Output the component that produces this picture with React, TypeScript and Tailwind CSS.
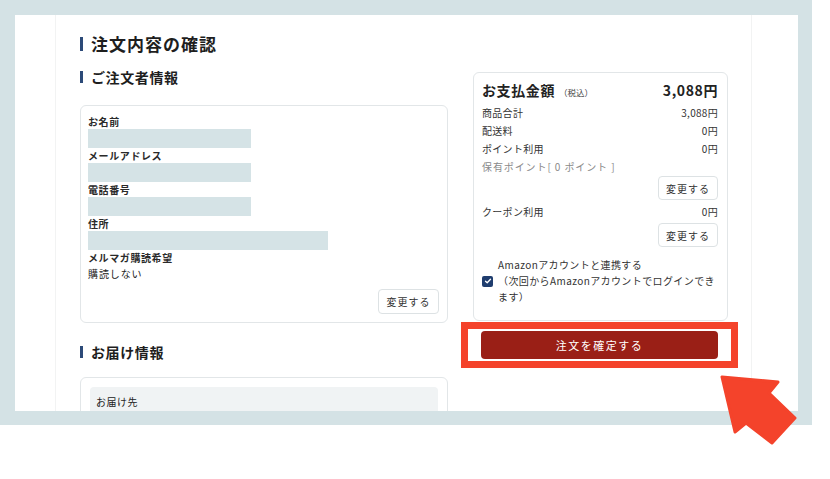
import React from "react";

const SectionTitle = ({ label, big }: { label: string; big?: boolean }) => (
  <div className="flex items-center gap-[8px]">
    <span className={`w-[3px] bg-[#2c4a78] ${big ? "h-[14px]" : "h-[12px]"}`} />
    <span className={`font-bold text-[#1e1e1e] ${big ? "text-[17px] leading-[24px] tracking-[1px]" : "text-[14px] leading-[20px] tracking-[0.6px]"}`}>
      {label}
    </span>
  </div>
);

const Field = ({ label, wide }: { label: string; wide?: boolean }) => (
  <>
    <div className="text-[10px] leading-[15px] font-bold tracking-[0.6px] text-[#2a2a2a]">{label}</div>
    <div className={`h-[19px] bg-[#d5e3e6] ${wide ? "w-[240px]" : "w-[163px]"}`} />
  </>
);

const SmallButton = ({ className = "" }: { className?: string }) => (
  <button className={`self-end w-[60px] h-[24px] border border-[#dde2e4] rounded-[4px] bg-white text-[10px] tracking-[1px] text-[#333] ${className}`}>
    変更する
  </button>
);

const Row = ({ label, value, muted }: { label: string; value?: string; muted?: boolean }) => (
  <div className={`flex justify-between text-[10px] leading-[18px] ${muted ? "text-[#8a8a8a] tracking-[0.9px]" : "text-[#333] tracking-[0.3px]"}`}>
    <span>{label}</span>
    {value && <span>{value}</span>}
  </div>
);

export default function App() {
  return (
    <div className="relative w-[830px] h-[479px] bg-white overflow-hidden font-['Noto_Sans_CJK_JP',sans-serif] text-[#222]">
      <div className="w-[812px] h-[425px] bg-[#d4e2e5] pt-[15px] pl-[15px]">
        <div className="w-[783px] h-[396px] bg-white overflow-hidden">
          <div className="ml-[40px] w-[697px] h-full border-x border-[#f2f3f3] pl-[24px] pr-[23px] pt-[17px]">
            <SectionTitle label="注文内容の確認" big />

            <div className="flex items-start gap-[25px] mt-[11px]">
              {/* left column */}
              <div className="w-[368px] flex flex-col">
                <SectionTitle label="ご注文者情報" />
                <div className="mt-[18px] border border-[#e2e6e8] rounded-[6px] pt-[8px] pl-[7px] pr-[8px] pb-[8px] flex flex-col">
                  <Field label="お名前" />
                  <Field label="メールアドレス" />
                  <Field label="電話番号" />
                  <Field label="住所" wide />
                  <div className="text-[10px] leading-[15px] font-bold tracking-[0.6px] text-[#2a2a2a]">メルマガ購読希望</div>
                  <div className="text-[10px] leading-[17px] tracking-[0.9px]">購読しない</div>
                  <SmallButton className="mt-[7px] w-[61px] h-[25px]" />
                </div>

                <div className="mt-[19px]">
                  <SectionTitle label="お届け情報" />
                </div>
                <div className="mt-[15px] border border-[#e2e6e8] rounded-[6px] p-[9px]">
                  <div className="bg-[#f0f3f4] rounded-[4px] pt-[8px] px-[6px] h-[80px]">
                    <div className="text-[10px] leading-[14px] tracking-[0.5px]">お届け先</div>
                  </div>
                </div>
              </div>

              {/* right column */}
              <div className="w-[255px] flex flex-col mt-[5px]">
                <div className="border border-[#e2e6e8] rounded-[6px] pt-[7px] pl-[8px] pr-[9px] pb-[15px] flex flex-col">
                  <div className="flex justify-between items-center h-[20px]">
                    <div className="flex items-baseline">
                      <span className="text-[14px] font-bold tracking-[0.6px]">お支払金額</span>
                      <span className="text-[8.5px] ml-[4px] text-[#444]">（税込）</span>
                    </div>
                    <span className="text-[14px] font-bold tracking-[0.6px]">3,088円</span>
                  </div>
                  <div className="mt-[4px]">
                    <Row label="商品合計" value="3,088円" />
                    <Row label="配送料" value="0円" />
                    <Row label="ポイント利用" value="0円" />
                    <Row label="保有ポイント[ 0 ポイント ]" muted />
                  </div>
                  <SmallButton />
                  <div className="mt-[3px]">
                    <Row label="クーポン利用" value="0円" />
                  </div>
                  <SmallButton className="mt-[2px]" />
                  <div className="mt-[10px] flex items-center gap-[5px]">
                    <span className="w-[11px] h-[11px] rounded-[2px] bg-[#1f3d6e] flex items-center justify-center shrink-0">
                      <svg width="8" height="8" viewBox="0 0 8 8">
                        <path d="M1.5 4.2 L3.2 5.8 L6.5 2.2" fill="none" stroke="white" strokeWidth="1.3" strokeLinecap="round" strokeLinejoin="round" />
                      </svg>
                    </span>
                    <div className="text-[10px] leading-[16px] tracking-[0.4px] text-[#333]">
                      Amazonアカウントと連携する
                      <br />
                      （次回からAmazonアカウントでログインでき
                      <br />
                      ます）
                    </div>
                  </div>
                </div>
                <button className="mt-[10px] ml-[8px] w-[237px] h-[28px] rounded-[4px] bg-[#9a1f16] text-white text-[11px] tracking-[1.5px]">
                  注文を確定する
                </button>
              </div>
            </div>
          </div>
        </div>
      </div>

      {/* annotation overlays */}
      <div className="absolute left-[461px] top-[322px] w-[277px] h-[46px] border-[7px] border-[#f4432b]" />
      <svg className="absolute left-[715px] top-[370px]" width="90" height="80" viewBox="0 0 90 80">
        <polygon
          points="7,7 63,12 54,23 80,48 57,73 31,53 20,62"
          fill="#f4432b"
          stroke="#f4432b"
          strokeWidth="3"
          strokeLinejoin="round"
        />
      </svg>
    </div>
  );
}
